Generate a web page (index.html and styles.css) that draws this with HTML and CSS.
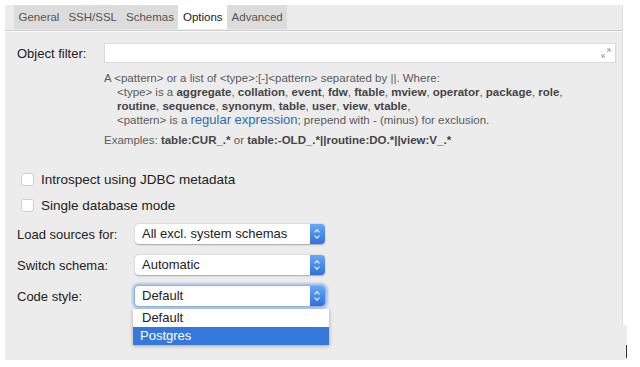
FILE: index.html
```html
<!DOCTYPE html>
<html lang="en">
<head>
  <meta charset="UTF-8" />
  <title>Options</title>
  <link rel="stylesheet" href="styles.css">
</head>
<body>

  <div class="panel">
    <div class="tabs">
      <span class="tab">General</span>
      <span class="tab">SSH/SSL</span>
      <span class="tab">Schemas</span>
      <span class="tab active">Options</span>
      <span class="tab">Advanced</span>
    </div>
    <div class="separator"></div>

    <div class="filter-row">
      <label>Object filter:</label>
      <div class="filter-input">
        <svg class="expand" width="10" height="10" viewBox="0 0 10 10">
          <path d="M6 1h3v3M9 1L6.2 3.8M4 9H1V6M1 9l2.8-2.8" fill="none" stroke="#9a9a9a" stroke-width="1"/>
        </svg>
      </div>
    </div>

    <div class="help">
      <p>A &lt;pattern&gt; or a list of &lt;type&gt;:[-]&lt;pattern&gt; separated by ||. Where:</p>
      <p class="indent">&lt;type&gt; is a <b>aggregate</b>, <b>collation</b>, <b>event</b>, <b>fdw</b>, <b>ftable</b>, <b>mview</b>, <b>operator</b>, <b>package</b>, <b>role</b>,</p>
      <p class="indent"><b>routine</b>, <b>sequence</b>, <b>synonym</b>, <b>table</b>, <b>user</b>, <b>view</b>, <b>vtable</b>,</p>
      <p class="indent">&lt;pattern&gt; is a <a href="#">regular expression</a>; prepend with - (minus) for exclusion.</p>
      <p class="examples">Examples: <b>table:CUR_.*</b> or <b>table:-OLD_.*||routine:DO.*||view:V_.*</b></p>
    </div>

    <div class="checks">
      <div class="check-row"><span class="checkbox"></span>Introspect using JDBC metadata</div>
      <div class="check-row"><span class="checkbox"></span>Single database mode</div>
    </div>

    <div class="form-grid">
      <label>Load sources for:</label>
      <div class="select">All excl. system schemas<span class="stepper"></span></div>

      <label>Switch schema:</label>
      <div class="select">Automatic<span class="stepper"></span></div>

      <label>Code style:</label>
      <div class="select focused">Default<span class="stepper"></span>
        <div class="dropdown">
          <div class="option">Default</div>
          <div class="option selected">Postgres</div>
        </div>
      </div>
    </div>

    <div class="corner"></div>
  </div>

</body>
</html>
```

FILE: styles.css
```css
html, body {
  margin: 0;
  padding: 0;
  background: white;
}

.panel {
  position: relative;
  width: 617px;
  height: 355px;
  margin-left: 5px;
  background: #ececec;
  border-right: 1px solid #dcdcdc;
  font-family: 'Liberation Sans', Arial, sans-serif;
  color: #222;
}

.tabs {
  display: flex;
  width: max-content;
  margin: 5px 0 0 9px;
  background: #dcdcdc;
  height: 24px;
}

.tab {
  padding: 0 4.5px;
  font-size: 11.5px;
  line-height: 24px;
  color: #555;
}

.tab.active {
  background: white;
  color: #222;
}

.separator {
  margin-top: 1px;
  border-top: 1px solid #cdcdcd;
  border-bottom: 1px solid #fafafa;
}

.filter-row {
  display: flex;
  align-items: center;
  margin: 11px 0 0 12px;
}

.filter-row label {
  width: 87px;
  font-size: 13px;
}

.filter-input {
  position: relative;
  width: 512px;
  height: 20px;
  box-sizing: border-box;
  background: white;
  border: 1px solid #dadada;
}

.expand {
  position: absolute;
  right: 4px;
  top: 4px;
}

.help {
  margin: 8px 0 0 99px;
  font-size: 11.5px;
  color: #5a5a5a;
}

.help p {
  margin: 0;
  line-height: 14px;
  white-space: nowrap;
}

.help b {
  color: #444;
}

.help .indent {
  padding-left: 13px;
}

.help a {
  color: #2b6cb0;
  font-size: 13px;
  text-decoration: none;
}

.help .examples {
  margin-top: 6px;
}

.checks {
  display: flex;
  flex-direction: column;
  gap: 6px;
  margin: 22px 0 0 16px;
}

.check-row {
  display: flex;
  align-items: center;
  height: 20px;
  font-size: 13.5px;
}

.checkbox {
  width: 13px;
  height: 13px;
  margin-right: 7px;
  box-sizing: border-box;
  background: white;
  border: 1px solid #d0d0d0;
  border-radius: 3px;
}

.form-grid {
  display: grid;
  grid-template-columns: 118px 190px;
  row-gap: 11px;
  align-items: center;
  margin: 9px 0 0 12px;
}

.form-grid label {
  font-size: 13px;
}

.select {
  position: relative;
  height: 20px;
  line-height: 20px;
  padding-left: 7px;
  font-size: 13px;
  background: white;
  border-radius: 4px;
  box-shadow: 0 0.5px 1.5px rgba(0, 0, 0, 0.3);
}

.select.focused {
  box-shadow: 0 0 0 1px #8fb3e8, 0 0 2px 3px rgba(120, 165, 235, 0.55);
}

.stepper {
  position: absolute;
  right: 0;
  top: 0;
  width: 15px;
  height: 20px;
  background: linear-gradient(#68a8f6, #2f70dc);
  border-radius: 0 4px 4px 0;
}

.stepper::before,
.stepper::after {
  content: '';
  position: absolute;
  left: 5px;
  width: 3px;
  height: 3px;
  border: solid white;
  border-width: 1px 0 0 1px;
}

.stepper::before {
  top: 6px;
  transform: rotate(45deg);
}

.stepper::after {
  top: 10px;
  transform: rotate(225deg);
}

.dropdown {
  position: absolute;
  left: -2px;
  top: 23px;
  width: 196px;
  background: white;
  box-shadow: 0 1px 4px rgba(0, 0, 0, 0.3);
  z-index: 3;
}

.option {
  height: 18px;
  line-height: 18px;
  padding-left: 9px;
  font-size: 13px;
}

.option.selected {
  padding-left: 7px;
  background: #3478db;
  color: white;
}

.corner {
  position: absolute;
  right: -5px;
  top: 320px;
  width: 168px;
  height: 37px;
  background: #ececec;
}

.corner::after {
  content: '';
  position: absolute;
  right: 0;
  top: 20px;
  width: 1px;
  height: 13px;
  background: #333;
}
```
